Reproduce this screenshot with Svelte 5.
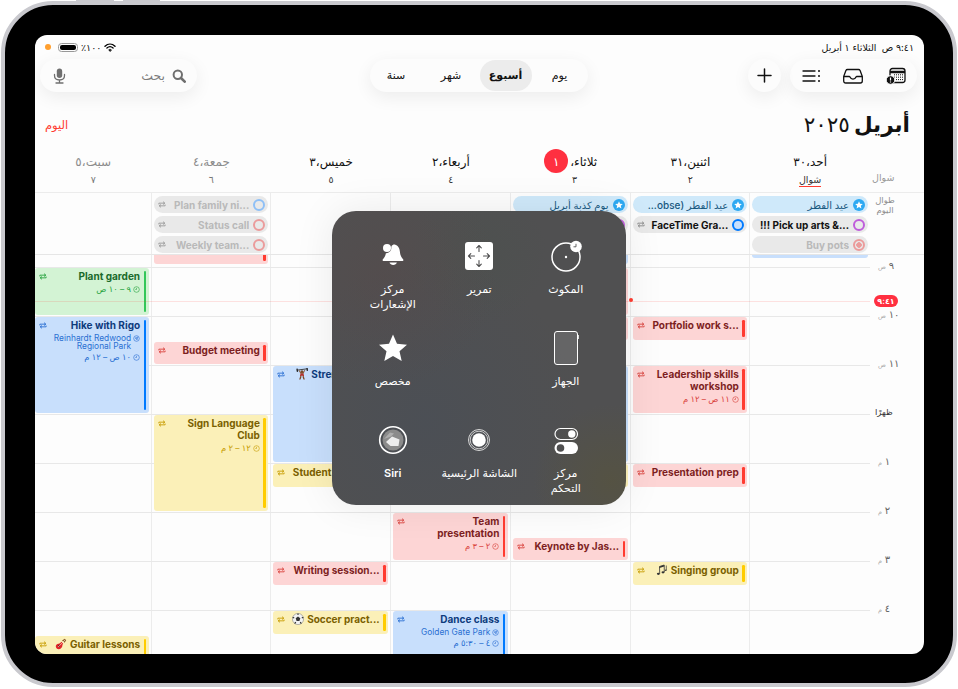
<script>
  const HOUR = 49;
  const FIRST = 12; // px from the top of the timeline to 9 am

  const heads = [
    { name: 'أحد،٣٠', sub: 'شوال', mark: true },
    { name: 'اثنين،٣١', sub: '٢' },
    { name: 'ثلاثاء،', badge: '١', sub: '٣' },
    { name: 'أربعاء،٢', sub: '٤' },
    { name: 'خميس،٣', sub: '٥' },
    { name: 'جمعة،٤', sub: '٦', off: true },
    { name: 'سبت،٥', sub: '٧', off: true }
  ];

  const allDay = [
    [
      { t: 'عيد الفطر', kind: 'holiday' },
      { t: '!!! Pick up arts &...', kind: 'task', ring: 'purple' },
      { t: 'Buy pots', kind: 'done', ring: 'coral', dot: true }
    ],
    [
      { t: 'عيد الفطر (obse...', kind: 'holiday' },
      { t: 'FaceTime Gra...', kind: 'task', ring: 'blue', rep: true }
    ],
    [
      { t: 'يوم كذبة أبريل', kind: 'holiday' },
      { t: '', kind: 'task', ring: 'purple' }
    ],
    [],
    [],
    [
      { t: 'Plan family ni...', kind: 'done', ring: 'sky', rep: true },
      { t: 'Status call', kind: 'done', ring: 'coral', rep: true },
      { t: 'Weekly team...', kind: 'done', ring: 'coral', rep: true }
    ],
    []
  ];

  const events = [
    [{ c: 'blue', s: 8, d: 0.84, t: '' }],
    [
      { c: 'red', s: 10, d: 0.5, t: 'Portfolio work s...' },
      { c: 'red', s: 11, d: 1, t: 'Leadership skills workshop', time: '١١ ص – ١٢ م' },
      { c: 'red', s: 13, d: 0.5, t: 'Presentation prep' },
      { c: 'yellow', s: 15, d: 0.5, t: 'Singing group', emoji: 'notes' }
    ],
    [
      { c: 'blue', s: 8.5, d: 0.45, t: '' },
      { c: 'red', s: 9, d: 1, t: '' },
      { c: 'red', s: 10, d: 0.5, t: '' },
      { c: 'blue', s: 11, d: 2, t: '' },
      { c: 'yellow', s: 13, d: 0.5, t: '' },
      { c: 'red', s: 14.5, d: 0.5, t: 'Keynote by Jas...' }
    ],
    [
      { c: 'red', s: 14, d: 1, t: 'Team presentation', time: '٢ – ٣ م' },
      { c: 'blue', s: 16, d: 1.5, t: 'Dance class', place: 'Golden Gate Park', time: '٤ – ٥:٣٠ م' }
    ],
    [
      { c: 'blue', s: 11, d: 2, t: 'Strength tra...', emoji: 'lift' },
      { c: 'yellow', s: 13, d: 0.5, t: 'Student council...' },
      { c: 'red', s: 15, d: 0.5, t: 'Writing session...' },
      { c: 'yellow', s: 16, d: 0.5, t: 'Soccer pract...', emoji: 'ball' }
    ],
    [
      { c: 'red', s: 8.45, d: 0.5, t: '' },
      { c: 'red', s: 10.5, d: 0.5, t: 'Budget meeting' },
      { c: 'yellow', s: 12, d: 2, t: 'Sign Language Club', time: '١٢ – ٢ م' }
    ],
    [
      { c: 'green', s: 9, d: 1, t: 'Plant garden', time: '٩ – ١٠ ص' },
      { c: 'blue', s: 10, d: 2, t: 'Hike with Rigo', place: 'Reinhardt Redwood Regional Park', time: '١٠ ص – ١٢ م' },
      { c: 'yellow', s: 16.5, d: 1, t: 'Guitar lessons', emoji: 'guitar' }
    ]
  ];

  const hours = [
    { s: 9, n: '٩', m: 'ص' },
    { s: 10, n: '١٠', m: 'ص' },
    { s: 11, n: '١١', m: 'ص' },
    { s: 12, n: 'ظهرًا', noon: true },
    { s: 13, n: '١', m: 'م' },
    { s: 14, n: '٢', m: 'م' },
    { s: 15, n: '٣', m: 'م' },
    { s: 16, n: '٤', m: 'م' }
  ];

  const y = h => FIRST + (h - 9) * HOUR;
</script>

{#snippet repeat()}
  <svg class="rep" viewBox="0 0 9 7" fill="none" stroke="currentColor" stroke-width="1" stroke-linecap="round" stroke-linejoin="round">
    <path d="M1 3V2h6.4M6 .6 7.6 2 6 3.2" />
    <path d="M8 4v1H1.6M3 6.4 1.4 5 3 3.8" />
  </svg>
{/snippet}

{#snippet clock()}
  <svg class="mini" viewBox="0 0 8 8" fill="none" stroke="currentColor" stroke-width=".7">
    <circle cx="4" cy="4" r="3.2" /><path d="M4 2.2V4H2.6" />
  </svg>
{/snippet}

{#snippet pin()}
  <svg class="mini" viewBox="0 0 8 8" fill="none" stroke="currentColor" stroke-width=".7">
    <circle cx="4" cy="4" r="3.2" /><path d="M2.4 3.6 5.6 2.4 4.4 5.6 4 4Z" />
  </svg>
{/snippet}

{#snippet emoji(name)}
  {#if name === 'ball'}
    <svg class="emo" viewBox="0 0 12 12">
      <circle cx="6" cy="6" r="5.6" fill="#f2f2f2" stroke="#777" stroke-width=".5" />
      <path d="M6 3.6 8.3 5.3 7.4 8H4.6L3.7 5.3Z" fill="#333" />
      <path d="M6 .4V2M11.3 4.2 9.8 5M9.3 10.6 8.2 9M2.7 10.6 3.8 9M.7 4.2 2.2 5" stroke="#333" stroke-width="1.1" />
    </svg>
  {:else if name === 'guitar'}
    <svg class="emo" viewBox="0 0 12 12">
      <path d="M7 2.4 9.8.8l1.4 1.4-1.6 2.6Z" fill="#8a5a2c" />
      <path d="M6.6 3.8 8.2 5.4c-.5.7-.8 1.2-.8 1.9.1 1.700-1.300 3.900-3.400 4-2 .1-3.400-1.400-3.200-3.200.1-1.400 1.300-2.400 2.500-2.400 1 0 1.300-.3 1.800-.7Z" fill="#e0262b" />
      <circle cx="4.200" cy="7.800" r="1" fill="#5b1414" />
      <path d="M3.200 9 10 2" stroke="#f5e9c8" stroke-width=".7" />
    </svg>
  {:else if name === 'lift'}
    <svg class="emo" viewBox="0 0 12 12">
      <path d="M.8 2.200 11.200.8" stroke="#333" stroke-width=".9" />
      <path d="M1 .6 1.500 3.900M11 -.3 11.400 2.800" stroke="#222" stroke-width="1.300" />
      <circle cx="6" cy="3.800" r="1.500" fill="#7a4a28" />
      <path d="M2.700 2.400 4.500 5.800h3l1.800-3.700-.8-.1-1.500 2.600H5L3.500 2.300Z" fill="#8a5a36" />
      <path d="M4.500 5.600h3l.6 2.400-1 .3L6 7.400l-1 .9-1.100-.3Z" fill="#b5322c" />
      <path d="M4.300 8 3.200 11.400h1.300L5.600 8.600M7.700 8l1.100 3.400H7.500L6.400 8.600" fill="#7a4a28" />
    </svg>
  {:else}
    <svg class="emo" viewBox="0 0 12 12" fill="#333" stroke="#333">
      <ellipse cx="2.400" cy="9.800" rx="1.500" ry="1.100" stroke="none" />
      <ellipse cx="7" cy="8.300" rx="1.500" ry="1.100" stroke="none" />
      <path d="M3.700 9.700 3.500 2.500 8.200 1 8.300 8.200" fill="none" stroke-width=".8" />
      <path d="M3.500 2.500 8.200 1v1.500L3.500 4Z" stroke="none" />
      <path d="M10.300 1.500v4.600" fill="none" stroke-width=".7" />
      <ellipse cx="9.800" cy="6.300" rx=".9" ry=".7" stroke="none" />
    </svg>
  {/if}
{/snippet}

<div class="device">
  <span class="side-btn one"></span>
  <span class="side-btn two"></span>

  <div class="screen" dir="rtl">
    <div class="status">
      <span>٩:٤١ ص &nbsp;الثلاثاء ١ أبريل</span>
      <div class="status-left" dir="ltr">
        <i class="rec"></i>
        <span class="battery"><i></i></span>
        <span dir="rtl">١٠٠٪</span>
        <svg width="12" height="9" viewBox="0 0 12 9" fill="none" stroke="#000" stroke-linecap="round">
          <path d="M1 3.200C4 .4 8 .4 11 3.200" stroke-width="1.400" />
          <path d="M2.900 5C4.800 3.300 7.200 3.300 9.100 5" stroke-width="1.300" />
          <path d="M6 8.400 4.600 6.800C5.400 6.100 6.600 6.100 7.400 6.800Z" fill="#000" stroke-width=".5" />
        </svg>
      </div>
    </div>

    <div class="toolbar">
      <div class="tool-group">
        <div class="glass tools">
          <svg width="20" height="18" viewBox="0 0 20 18" fill="none" stroke="#111" stroke-width="1.300">
            <rect x="4" y="1.500" width="15" height="14" rx="2.500" />
            <path d="M4 5h15" stroke-width="2.400" />
            <path d="M8 7.800h9M8 10.200h9M10 12.600h7" stroke-dasharray="1 1" stroke-width="1" />
            <circle cx="4.500" cy="13" r="4.300" fill="#111" stroke="#fcfcfc" stroke-width="1" />
            <path d="M4.500 10.600v2.900M4.500 14.600v.9" stroke="#fff" stroke-width="1.200" />
          </svg>
          <svg width="20" height="16" viewBox="0 0 20 16" fill="none" stroke="#111" stroke-width="1.300" stroke-linejoin="round">
            <path d="M4.500 1.500h11c.8 0 1.300.4 1.600 1l2.200 6v4.500c0 1.200-.8 2-2 2H2.700c-1.200 0-2-.8-2-2V8.500l2.200-6c.3-.6.800-1 1.600-1Z" />
            <path d="M.8 8.500h5.400c.4 0 .6.200.8.600.5 1.300 1.600 2 3 2s2.500-.7 3-2c.2-.4.4-.6.800-.6h5.400" />
          </svg>
          <svg width="18" height="14" viewBox="0 0 18 14" fill="none" stroke="#111" stroke-width="1.300" stroke-linecap="round">
            <path d="M1 2h12M1 7h12M1 12h12" />
            <path d="M17 2h.01M17 7h.01M17 12h.01" stroke-width="2" />
          </svg>
        </div>
        <div class="glass plus">
          <svg width="15" height="15" viewBox="0 0 15 15" stroke="#111" stroke-width="1.500" stroke-linecap="round">
            <path d="M7.500 1v13M1 7.500h13" />
          </svg>
        </div>
      </div>

      <div class="glass segments">
        <span>يوم</span>
        <span class="on">أسبوع</span>
        <span>شهر</span>
        <span>سنة</span>
      </div>

      <div class="glass search">
        <svg width="14" height="14" viewBox="0 0 14 14" fill="none" stroke="#6f6f6f">
          <circle cx="5.800" cy="5.800" r="4.200" stroke-width="2" />
          <path d="M9 9 12.700 12.700" stroke-width="2.600" stroke-linecap="round" />
        </svg>
        <span class="search-text">بحث</span>
        <svg width="13" height="16" viewBox="0 0 13 16" fill="#6f6f6f" stroke="#6f6f6f">
          <rect x="3.800" y="0.500" width="5.400" height="9.500" rx="2.700" stroke="none" />
          <path d="M1.500 6.500v1c0 2.800 2.200 4.500 5 4.500s5-1.700 5-4.500v-1M6.500 12v2.500M3 15h7" fill="none" stroke-width="1.300" stroke-linecap="round" />
        </svg>
      </div>
    </div>

    <div class="titlebar">
      <h1><b>أبريل</b> <span class="year">٢٠٢٥</span></h1>
      <span class="today">اليوم</span>
    </div>

    <div class="cols heads">
      <div class="head gutter">
        <small>شوال</small>
      </div>
      {#each heads as h}
        <div class="head" class:off={h.off}>
          <div class="name">
            <span>{h.name}</span>
            {#if h.badge}<em>{h.badge}</em>{/if}
          </div>
          <small class:mark={h.mark} class:shift={h.badge}>{h.sub}</small>
        </div>
      {/each}
    </div>

    <div class="cols allday">
      <div class="allday-label">طوال<br />اليوم</div>
      {#each allDay as col}
        <div class="allday-col">
          {#each col as p}
            <div class="pill {p.kind}">
              {#if p.kind === 'holiday'}
                <svg class="star" viewBox="0 0 12 12">
                  <circle cx="6" cy="6" r="6" fill="#2da9f2" />
                  <path d="M6 2.200 7.100 4.700 9.800 5 7.800 6.800 8.400 9.500 6 8.100 3.600 9.500 4.200 6.800 2.200 5 4.900 4.700Z" fill="#fff" />
                </svg>
              {:else}
                <i class="ring {p.ring}" class:dot={p.dot}></i>
              {/if}
              <span class="pill-text" dir="auto">{p.t}</span>
              {#if p.rep}{@render repeat()}{/if}
            </div>
          {/each}
        </div>
      {/each}
    </div>

    <div class="cols timeline">
      <div class="gutter-col">
        {#each hours as h}
          <div class="hour" class:noon={h.noon} style="top:{y(h.s) - 8}px">{h.n} <small>{h.m ?? ''}</small></div>
        {/each}
        <span class="now-badge" style="top:{y(9.69) - 6}px">٩:٤١</span>
      </div>
      {#each events as col}
        <div class="day">
          {#each col as e}
            <div class="ev {e.c}" style="top:{y(e.s) + 1}px;height:{e.d * HOUR - 2}px">
              <i class="bar"></i>
              <div class="ev-body">
                {#if e.t}<div class="ev-title" dir="ltr">{#if e.emoji}{@render emoji(e.emoji)}{/if}{e.t}</div>{/if}
                {#if e.place}<div class="ev-sub">{@render pin()}<span dir="ltr">{e.place}</span></div>{/if}
                {#if e.time}<div class="ev-sub">{@render clock()}<span>{e.time}</span></div>{/if}
              </div>
              {#if e.t}{@render repeat()}{/if}
            </div>
          {/each}
        </div>
      {/each}
      <div class="lines">
        {#each hours as h}
          <i style="top:{y(h.s)}px"></i>
        {/each}
      </div>
      <i class="now-line" style="top:{y(9.69)}px"></i>
      <i class="now-dot" style="top:{y(9.69) - 2}px"></i>
    </div>

    <div class="menu">
      <div class="cell">
        <div class="ic">
          <svg width="44" height="44" viewBox="0 0 44 44" fill="none" stroke="#fff">
            <circle cx="22" cy="23" r="14" stroke-width="1.500" />
            <circle cx="22" cy="23" r="1.200" fill="#fff" stroke="none" />
            <circle cx="32" cy="12.500" r="5.800" fill="#fff" stroke="none" />
            <path d="M32 9.800v3h-2.500" stroke="#555" stroke-width=".9" />
          </svg>
        </div>
        <span>المكوث</span>
      </div>
      <div class="cell">
        <div class="ic">
          <svg width="44" height="44" viewBox="0 0 44 44" fill="none">
            <rect x="8" y="8" width="28" height="28" rx="3" fill="#fff" />
            <path d="M22 11.500v6M22 26.500v6M11.500 22h6M26.500 22h6M19.700 13.800 22 11.500l2.300 2.300M19.700 30.200 22 32.500l2.300-2.300M13.800 19.700 11.500 22l2.300 2.300M30.200 19.700 32.500 22l-2.300 2.300" stroke="#4f4f50" stroke-width="1.100" stroke-linecap="round" stroke-linejoin="round" />
          </svg>
        </div>
        <span>تمرير</span>
      </div>
      <div class="cell">
        <div class="ic">
          <svg width="44" height="44" viewBox="0 0 44 44" fill="#fff">
            <path d="M22.500 10.500c3.600 0 5.800 2.700 6.300 6.400.5 4.200 1.100 6 3.300 8.300.7.800.2 1.800-.8 1.800H12.700c-1 0-1.500-1-.8-1.800 1.800-2 2.500-3.500 3-6 2.700.2 5.400-2 5.400-4.900 0-1.500-.1-2.800 2.200-3.800Z" />
            <circle cx="16" cy="14" r="4" />
            <path d="M18.500 28.500h7.400c-.4 1.600-1.900 2.500-3.700 2.500s-3.300-.9-3.700-2.500Z" />
          </svg>
        </div>
        <span>مركز<br />الإشعارات</span>
      </div>

      <div class="cell">
        <div class="ic">
          <svg width="44" height="44" viewBox="0 0 44 44" fill="rgba(255,255,255,.12)" stroke="#fff" stroke-width="1">
            <rect x="10.500" y="5.500" width="23" height="33" rx="2.500" />
            <path d="M34.500 9v4" stroke-width=".8" />
          </svg>
        </div>
        <span>الجهاز</span>
      </div>
      <div class="cell blank"></div>
      <div class="cell">
        <div class="ic">
          <svg width="44" height="44" viewBox="0 0 44 44" fill="#fff">
            <path d="M22 8.500 26 17.800 36 18.700 28.500 25.200 30.700 35 22 29.900 13.300 35 15.500 25.200 8 18.700 18 17.800Z" />
          </svg>
        </div>
        <span>مخصص</span>
      </div>

      <div class="cell">
        <div class="ic">
          <svg width="44" height="44" viewBox="0 0 44 44" fill="none">
            <rect x="11" y="10.500" width="22.500" height="11" rx="5.500" stroke="#fff" stroke-width="1.200" />
            <circle cx="27.800" cy="16" r="3.700" fill="#fff" />
            <rect x="10.500" y="24" width="23.500" height="12" rx="6" fill="#fff" />
            <circle cx="16.500" cy="30" r="3.800" fill="#4f4f50" />
          </svg>
        </div>
        <span>مركز<br />التحكم</span>
      </div>
      <div class="cell">
        <div class="ic">
          <svg width="44" height="44" viewBox="0 0 44 44" fill="none">
            <circle cx="22" cy="22" r="10.500" stroke="#d8d8d8" stroke-width="1" />
            <circle cx="22" cy="22" r="8.800" stroke="#e8e8e8" stroke-width=".8" />
            <circle cx="22" cy="22" r="6.800" fill="#fff" />
          </svg>
        </div>
        <span>الشاشة الرئيسية</span>
      </div>
      <div class="cell">
        <div class="ic">
          <svg width="44" height="44" viewBox="0 0 44 44" fill="none">
            <circle cx="22" cy="22" r="13.300" stroke="#fff" stroke-width="1.600" />
            <circle cx="22" cy="22" r="10.500" fill="#8b8b8b" />
            <path d="M15 24 21 18.500 28.500 21.500 27.500 28 19.500 28Z" fill="#ededed" />
            <path d="M13 21 19 14.500 23 15.500 20 18.500Z" fill="#aeaeae" />
          </svg>
        </div>
        <span class="latin">Siri</span>
      </div>
    </div>
  </div>
</div>

<style>
  :global(body) {
    margin: 0;
    background: #fff;
  }

  .device {
    position: relative;
    box-sizing: border-box;
    width: 956px;
    height: 686px;
    margin: 1px 0 0 1px;
    padding: 30px 29px 29px 30px;
    background: #000;
    border: 4px solid #c9c9ce;
    border-radius: 52px;
    font-family: Inter, "DejaVu Sans", sans-serif;
  }
  .side-btn {
    position: absolute;
    top: -5px;
    height: 1px;
    background: #c9c9ce;
  }
  .side-btn.one { left: 71px; width: 38px; }
  .side-btn.two { left: 118px; width: 37px; }

  .screen {
    position: relative;
    display: flex;
    flex-direction: column;
    height: 100%;
    overflow: hidden;
    background: #fdfdfd;
    border-radius: 12px;
    color: #111;
  }

  .status {
    display: flex;
    align-items: center;
    justify-content: space-between;
    height: 24px;
    flex: none;
    padding: 0 10px 0 10px;
    font-size: 9.5px;
  }
  .status-left {
    display: flex;
    align-items: center;
    gap: 3px;
  }
  .rec {
    width: 6px;
    height: 6px;
    margin-right: 4px;
    border-radius: 50%;
    background: #ff9f2e;
  }
  .battery {
    box-sizing: border-box;
    width: 20px;
    height: 9px;
    padding: 1px;
    border: 1px solid #999;
    border-radius: 3.500px;
  }
  .battery i {
    display: block;
    height: 100%;
    background: #000;
    border-radius: 2px;
  }

  .toolbar {
    display: grid;
    grid-template-columns: 1fr auto 1fr;
    align-items: center;
    flex: none;
    height: 33px;
    padding: 0 7px 0 5px;
  }
  .glass {
    height: 33px;
    box-sizing: border-box;
    background: #fcfcfc;
    border-radius: 17px;
    box-shadow: 0 5px 18px rgba(0, 0, 0, 0.07);
  }
  .tool-group {
    display: flex;
    gap: 9px;
  }
  .tools {
    display: flex;
    align-items: center;
    justify-content: space-between;
    width: 127px;
    padding: 0 11px 0 12px;
  }
  .plus {
    display: flex;
    align-items: center;
    justify-content: center;
    width: 33px;
  }
  .segments {
    display: grid;
    grid-template-columns: 56px 52px 57px 53px;
    align-items: center;
    width: 218px;
    padding: 1px 0;
    text-align: center;
    font-size: 11px;
    font-weight: 500;
  }
  .segments span { line-height: 31px; }
  .segments .on {
    background: #ececec;
    border-radius: 16px;
    font-weight: 700;
  }
  .search {
    display: flex;
    align-items: center;
    justify-self: end;
    width: 157px;
    padding: 0 11px 0 13px;
    color: #7c7c7c;
  }
  .search-text {
    flex: 1;
    margin-right: 7px;
    font-size: 12.500px;
  }

  .titlebar {
    display: flex;
    align-items: flex-end;
    justify-content: space-between;
    flex: none;
    height: 47px;
    padding: 0 14px 7px 10px;
  }
  h1 {
    margin: 0;
    font-size: 21.500px;
    font-weight: 400;
    line-height: 30px;
    word-spacing: -2px;
  }
  .year { letter-spacing: -1px; }
  .today {
    margin-bottom: 7px;
    font-size: 11.500px;
    color: #ff3b30;
  }

  .cols {
    display: grid;
    grid-template-columns: 54px repeat(6, 119.75px) 1fr;
    flex: none;
  }
  .heads { height: 46px; padding-top: 6px; box-sizing: border-box; }
  .head {
    display: flex;
    flex-direction: column;
    align-items: center;
    font-size: 12px;
  }
  .head.off { color: #8c8c8c; }
  .head small {
    margin-top: 4px;
    font-size: 9.500px;
    line-height: 12px;
    color: #333;
  }
  .head.off small { color: #777; }
  .head.gutter small {
    align-self: flex-end;
    margin-top: 20px;
    margin-left: 2px;
    color: #999;
  }
  .head small.mark {
    height: 12px;
    border-bottom: 1px solid #ff3b30;
  }
  .head small.shift { margin-right: -8px; }
  .name {
    display: flex;
    align-items: center;
    gap: 2px;
    height: 18px;
    white-space: nowrap;
  }
  .name em {
    display: flex;
    align-items: center;
    justify-content: center;
    width: 24px;
    height: 24px;
    font-style: normal;
    color: #fff;
    background: #ff3040;
    border-radius: 50%;
    font-size: 12px;
  }

  .allday {
    height: 63px;
    border-top: 1px solid #ececec;
    border-bottom: 1px solid #e6e6e6;
    box-sizing: border-box;
  }
  .allday-label {
    padding-top: 2px;
    padding-right: 24px;
    font-size: 8.500px;
    line-height: 10px;
    color: #8e8e8e;
    text-align: center;
    white-space: nowrap;
  }
  .allday-col {
    display: flex;
    flex-direction: column;
    gap: 3px;
    padding: 3px 2px 0;
    border-right: 1px solid #ececec;
  }
  .allday-col:nth-child(2) { border-right: 0; }
  .pill {
    display: flex;
    align-items: center;
    gap: 4px;
    height: 17px;
    padding: 0 3px;
    background: #e9e9e9;
    border-radius: 9px;
    font-size: 10px;
    font-weight: 700;
  }
  .pill-text {
    flex: 1;
    overflow: hidden;
    text-align: right;
    white-space: nowrap;
  }
  .pill.holiday {
    background: #cfe9fa;
    color: #17587f;
    font-weight: 500;
  }
  .pill.done {
    color: #b9b9b9;
  }
  .star {
    width: 12px;
    height: 12px;
    flex: none;
  }
  .ring {
    box-sizing: border-box;
    width: 12px;
    height: 12px;
    flex: none;
    border: 2px solid;
    border-radius: 50%;
  }
  .ring.purple { border-color: #bf5ddb; }
  .ring.blue { border-color: #007aff; }
  .ring.sky { border-color: #8fc0f6; }
  .ring.coral { border-color: #eb9c9c; }
  .ring.dot { background: radial-gradient(circle, #eb9c9c 0 2.500px, transparent 3px); }
  .rep {
    flex: none;
    width: 8px;
    height: 7px;
  }
  .pill .rep { color: #8a8a8a; margin-left: 1px; }
  .pill.done .rep { color: #999; }

  .timeline {
    position: relative;
    flex: 1;
    overflow: hidden;
    min-height: 0;
  }
  .gutter-col {
    position: relative;
  }
  .hour {
    position: absolute;
    left: 8px;
    font-size: 10px;
    line-height: 12px;
    color: #666;
    white-space: nowrap;
  }
  .hour small {
    font-size: 6.500px;
    color: #aaa;
  }
  .hour.noon {
    left: 5px;
    font-size: 8.500px;
    color: #333;
  }
  .now-badge {
    position: absolute;
    left: 4px;
    width: 24px;
    height: 12px;
    z-index: 3;
    font-size: 8px;
    font-weight: 700;
    line-height: 12px;
    text-align: center;
    color: #fff;
    background: #ff3040;
    border-radius: 6px;
  }
  .day {
    position: relative;
    border-right: 1px solid #ececec;
  }
  .timeline .day:nth-child(2) { border-right: 0; }

  .ev {
    position: absolute;
    right: 2px;
    left: 2px;
    z-index: 1;
    display: flex;
    box-sizing: border-box;
    gap: 3.500px;
    padding: 3px 2.500px 3px 4px;
    overflow: hidden;
    border-radius: 3px;
  }
  .day:nth-child(8) .ev { left: 0; }
  .bar {
    width: 2.400px;
    flex: none;
    border-radius: 1.200px;
  }
  .ev-body {
    flex: 1;
    min-width: 0;
    text-align: right;
  }
  .ev-title {
    font-size: 10px;
    font-weight: 700;
    line-height: 12px;
    margin-top: -1px;
    text-align: right;
  }
  .ev-sub {
    display: flex;
    gap: 2px;
    font-size: 8.400px;
    line-height: 8.500px;
    margin-top: 2.500px;
  }
  .ev-sub span { text-align: right; }
  .ev .rep { margin-top: 2px; }
  .mini {
    width: 7px;
    height: 7px;
    flex: none;
    margin-top: 1px;
  }
  .emo {
    width: 12px;
    height: 12px;
    margin-right: 3px;
    vertical-align: -2px;
  }
  .red { background: #fdd5d5; color: #7d1f1f; }
  .red .bar { background: #ff3b30; }
  .red .ev-sub, .red .rep { color: #d9423c; }
  .blue { background: #c8dffc; color: #0e3b7c; }
  .blue .bar { background: #007aff; }
  .blue .ev-sub, .blue .rep { color: #2a6fd2; }
  .yellow { background: #fbf0b8; color: #7a6000; }
  .yellow .bar { background: #ffcc00; }
  .yellow .ev-sub, .yellow .rep { color: #c79c00; }
  .green { background: #d3f3d4; color: #1a6a2b; }
  .green .bar { background: #34c759; }
  .green .ev-sub, .green .rep { color: #28a33f; }

  .lines {
    position: absolute;
    inset: 0 54px 0 0;
  }
  .lines i {
    position: absolute;
    left: 0;
    right: 0;
    height: 1px;
    background: #e8e8e8;
  }
  .now-line {
    position: absolute;
    left: 0;
    right: 54px;
    height: 1px;
    z-index: 2;
    background: rgba(255, 59, 48, 0.14);
  }
  .now-dot {
    position: absolute;
    left: 594px;
    width: 4px;
    height: 4px;
    margin-top: -1px;
    z-index: 2;
    background: #ff3b30;
    border-radius: 50%;
  }

  .menu {
    position: absolute;
    top: 176px;
    left: 297px;
    z-index: 5;
    display: grid;
    grid-template-columns: repeat(3, 86.500px);
    grid-auto-rows: 92px;
    width: 294px;
    height: 294px;
    box-sizing: border-box;
    padding: 23px 17px 0;
    background:
      radial-gradient(circle at 95% 92%, rgba(88, 84, 58, 0.6), transparent 20%),
      radial-gradient(circle at 18% 22%, rgba(88, 72, 72, 0.4), transparent 34%),
      radial-gradient(circle at 50% 15%, rgba(72, 82, 76, 0.35), transparent 24%),
      radial-gradient(ellipse at 32% 72%, rgba(70, 78, 90, 0.45), transparent 55%),
      #505051;
    border-radius: 24px;
    box-shadow: 0 0 40px rgba(0, 0, 0, 0.08);
    color: #fff;
  }
  .cell {
    display: flex;
    flex-direction: column;
    align-items: center;
    gap: 4px;
    font-size: 11px;
    line-height: 15px;
    text-align: center;
    white-space: nowrap;
  }
  .ic {
    width: 44px;
    height: 44px;
    flex: none;
  }
  .ic svg { display: block; }
  .latin { font-weight: 600; }
</style>
